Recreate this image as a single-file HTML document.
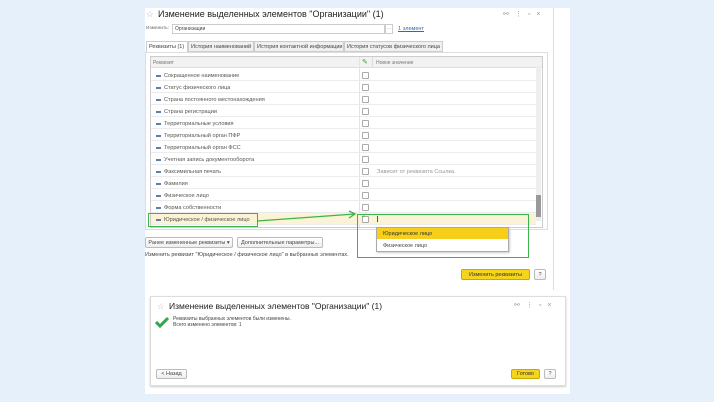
<!DOCTYPE html>
<html><head><meta charset="utf-8"><style>
*{margin:0;padding:0;box-sizing:border-box}
body{width:714px;height:402px;background:#e6f0fa;font-family:"Liberation Sans",sans-serif;position:relative;overflow:hidden;color:#444}
.a{position:absolute}
.t{font-size:5.5px;white-space:nowrap}
.row{position:absolute;left:151px;width:385px;height:12px;border-bottom:1px solid #ececec}
.row .d{position:absolute;left:5px;top:6px;width:5px;height:1.5px;background:#5c7fb0}
.row .l{position:absolute;left:13px;top:3.5px;font-size:5.6px;color:#555;white-space:nowrap}
.row .c{position:absolute;left:211px;top:2.5px;width:7px;height:7px;border:1px solid #aaa;background:#fff;border-radius:1px}
.btn{position:absolute;border:1px solid #bbb;background:linear-gradient(#fff,#eee);font-size:5.5px;color:#444;text-align:center;border-radius:2px}
.y{background:#f5d41c;border-color:#c9a800;color:#333}
</style></head><body>
<div class="a" style="left:145px;top:8px;width:425px;height:282px;background:#fff"></div>
<div class="a" style="left:553px;top:8px;width:1px;height:282px;background:#ddd"></div>
<div class="a t" style="left:146px;top:9px;font-size:9px;color:#bbb">☆</div>
<div class="a" style="left:158px;top:9px;font-size:9px;color:#222">Изменение выделенных элементов "Организации" (1)</div>
<div class="a t" style="left:503px;top:10px;font-size:7px;color:#999;letter-spacing:6px">⚯⋮▫×</div>
<div class="a t" style="left:146px;top:26px;font-size:4.8px;color:#666">Изменить:</div>
<div class="a" style="left:172px;top:24px;width:213px;height:10px;border:1px solid #ccc"></div>
<div class="a t" style="left:175px;top:26px;font-size:5px">Организации</div>
<div class="a" style="left:385px;top:24px;width:8px;height:10px;border:1px solid #ccc;font-size:5px;color:#999;text-align:center">...</div>
<div class="a t" style="left:398px;top:26px;color:#2a6ab8;text-decoration:underline">1 элемент</div>
<div class="a" style="left:146px;top:41px;width:42px;height:12px;border:1px solid #ccc;border-bottom:none;background:#fff"></div>
<div class="a t" style="left:149px;top:44px">Реквизиты (1)</div>
<div class="a" style="left:188px;top:41px;width:66px;height:11px;border:1px solid #ccc;background:#f0f0f0"></div>
<div class="a t" style="left:191px;top:44px">История наименований</div>
<div class="a" style="left:254px;top:41px;width:90px;height:11px;border:1px solid #ccc;background:#f0f0f0"></div>
<div class="a t" style="left:257px;top:44px">История контактной информации</div>
<div class="a" style="left:344px;top:41px;width:99px;height:11px;border:1px solid #ccc;background:#f0f0f0"></div>
<div class="a t" style="left:347px;top:44px">История статусов физического лица</div>
<div class="a" style="left:145px;top:52px;width:403px;height:178px;border:1px solid #ddd"></div>
<div class="a" style="left:150px;top:56px;width:393px;height:172px;border:1px solid #ccc"></div>
<div class="a" style="left:151px;top:57px;width:391px;height:11px;background:#f2f2f2;border-bottom:1px solid #ddd"></div>
<div class="a t" style="left:153px;top:60px;font-size:5px;color:#777">Реквизит</div>
<div class="a" style="left:359px;top:57px;width:1px;height:170px;background:#e3e3e3"></div>
<div class="a" style="left:372px;top:57px;width:1px;height:11px;background:#ddd"></div>
<div class="a t" style="left:362px;top:58px;color:#3a3;font-size:7px">✎</div>
<div class="a t" style="left:376px;top:60px;font-size:5px;color:#777">Новое значение</div>
<div class="a" style="left:536px;top:66px;width:5px;height:155px;background:#eee"></div>
<div class="a" style="left:536px;top:195px;width:5px;height:22px;background:#999"></div>
<div class="row" style="top:69px"><i class="d"></i><span class="l">Сокращенное наименование</span><i class="c"></i></div>
<div class="row" style="top:81px"><i class="d"></i><span class="l">Статус физического лица</span><i class="c"></i></div>
<div class="row" style="top:93px"><i class="d"></i><span class="l">Страна постоянного местонахождения</span><i class="c"></i></div>
<div class="row" style="top:105px"><i class="d"></i><span class="l">Страна регистрации</span><i class="c"></i></div>
<div class="row" style="top:117px"><i class="d"></i><span class="l">Территориальные условия</span><i class="c"></i></div>
<div class="row" style="top:129px"><i class="d"></i><span class="l">Территориальный орган ПФР</span><i class="c"></i></div>
<div class="row" style="top:141px"><i class="d"></i><span class="l">Территориальный орган ФСС</span><i class="c"></i></div>
<div class="row" style="top:153px"><i class="d"></i><span class="l">Учетная запись документооборота</span><i class="c"></i></div>
<div class="row" style="top:165px"><i class="d"></i><span class="l">Факсимильная печать</span><i class="c"></i><span class="l" style="left:226px;color:#999">Зависит от реквизита Ссылка.</span></div>
<div class="row" style="top:177px"><i class="d"></i><span class="l">Фамилия</span><i class="c"></i></div>
<div class="row" style="top:189px"><i class="d"></i><span class="l">Физическое лицо</span><i class="c"></i></div>
<div class="row" style="top:201px"><i class="d"></i><span class="l">Форма собственности</span><i class="c"></i></div>
<div class="row" style="top:213px;background:#fbf3d5"><i class="d"></i><span class="l">Юридическое / физическое лицо</span><i class="c"></i><span class="a" style="left:210px;top:-1px;color:#3a3;font-size:7px">✓</span><span class="a" style="left:226px;top:3px;width:1px;height:6px;background:#555"></span></div>
<div class="a" style="left:148px;top:213px;width:110px;height:14px;border:1.5px solid #3cb44b"></div>
<div class="a" style="left:357px;top:214px;width:172px;height:44px;border:1.5px solid #3cb44b"></div>
<svg class="a" style="left:255px;top:210px" width="105" height="15"><path d="M2 11 L100 4 M94 1 L100 4 L94 8" stroke="#3cb44b" stroke-width="1.3" fill="none"/></svg>
<div class="a" style="left:376px;top:227px;width:133px;height:25px;border:1px solid #aaa;background:#fff;box-shadow:1px 1px 2px #ccc"></div>
<div class="a" style="left:377px;top:228px;width:131px;height:11px;background:#f7cf1b"></div>
<div class="a t" style="left:383px;top:231px;color:#333">Юридическое лицо</div>
<div class="a t" style="left:383px;top:243px">Физическое лицо</div>
<div class="btn" style="left:145px;top:237px;width:88px;height:11px;line-height:10px">Ранее измененные реквизиты ▾</div>
<div class="btn" style="left:237px;top:237px;width:86px;height:11px;line-height:10px">Дополнительные параметры...</div>
<div class="a t" style="left:145px;top:252px">Изменить реквизит "Юридическое / физическое лицо" в выбранных элементах.</div>
<div class="btn y" style="left:461px;top:269px;width:69px;height:11px;line-height:10px">Изменить реквизиты</div>
<div class="btn" style="left:534px;top:269px;width:12px;height:11px;line-height:10px">?</div>
<div class="a" style="left:145px;top:290px;width:425px;height:104px;background:#fff"></div>
<div class="a" style="left:150px;top:296px;width:416px;height:90px;border:1px solid #ddd;box-shadow:0 1px 2px #ccc"></div>
<div class="a t" style="left:157px;top:302px;font-size:8px;color:#bbb">☆</div>
<div class="a" style="left:169px;top:301px;font-size:8.5px;color:#222">Изменение выделенных элементов "Организации" (1)</div>
<div class="a t" style="left:514px;top:301px;font-size:7px;color:#999;letter-spacing:6px">⚯⋮▫×</div>
<svg class="a" style="left:155px;top:316px" width="14" height="12"><path d="M1 6 L5 10 L13 2" stroke="#2ea84a" stroke-width="3" fill="none"/></svg>
<div class="a t" style="left:173px;top:316px;font-size:5px">Реквизиты выбранных элементов были изменены.</div>
<div class="a t" style="left:173px;top:322px;font-size:5px">Всего изменено элементов: 1</div>
<div class="btn" style="left:156px;top:369px;width:31px;height:10px;line-height:9px">&lt; Назад</div>
<div class="btn y" style="left:511px;top:369px;width:29px;height:10px;line-height:9px">Готово</div>
<div class="btn" style="left:544px;top:369px;width:12px;height:10px;line-height:9px">?</div>
</body></html>
